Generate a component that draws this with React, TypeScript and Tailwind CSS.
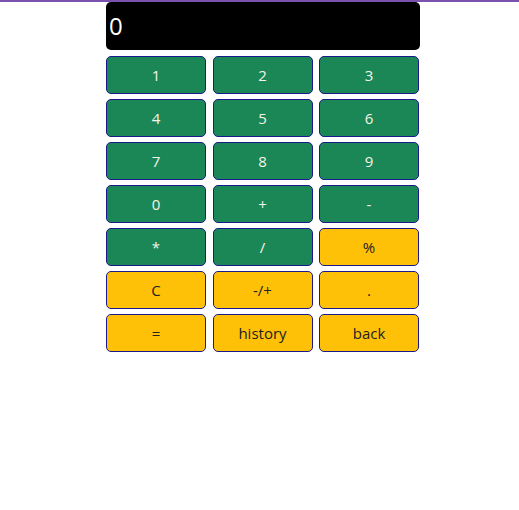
const keys: { label: string; tone: 'green' | 'yellow' }[] = [
  { label: '1', tone: 'green' },
  { label: '2', tone: 'green' },
  { label: '3', tone: 'green' },
  { label: '4', tone: 'green' },
  { label: '5', tone: 'green' },
  { label: '6', tone: 'green' },
  { label: '7', tone: 'green' },
  { label: '8', tone: 'green' },
  { label: '9', tone: 'green' },
  { label: '0', tone: 'green' },
  { label: '+', tone: 'green' },
  { label: '-', tone: 'green' },
  { label: '*', tone: 'green' },
  { label: '/', tone: 'green' },
  { label: '%', tone: 'yellow' },
  { label: 'C', tone: 'yellow' },
  { label: '-/+', tone: 'yellow' },
  { label: '.', tone: 'yellow' },
  { label: '=', tone: 'yellow' },
  { label: 'history', tone: 'yellow' },
  { label: 'back', tone: 'yellow' },
];

export default function App() {
  return (
    <div className="min-h-[510px] border-t-2 border-[#7b52ae] bg-white font-['Open_Sans',sans-serif]">
      <div className="ml-[106px] w-[314px]">
        <div className="flex h-[48px] items-center rounded-[5px] bg-black px-[3px] text-[24px] text-white">
          0
        </div>
        <div className="mt-[6px] grid grid-cols-[100px_100px_100px] gap-x-[6.5px] gap-y-[5px]">
          {keys.map((k) => (
            <button
              key={k.label}
              className={
                k.tone === 'green'
                  ? 'h-[38px] rounded-[5px] border border-[#1a1a8c] bg-[#1b8756] text-[15px] text-[#f4f4e8]'
                  : 'h-[38px] rounded-[5px] border border-[#1a1a8c] bg-[#ffc107] text-[15px] text-[#222]'
              }
            >
              {k.label}
            </button>
          ))}
        </div>
      </div>
    </div>
  );
}
